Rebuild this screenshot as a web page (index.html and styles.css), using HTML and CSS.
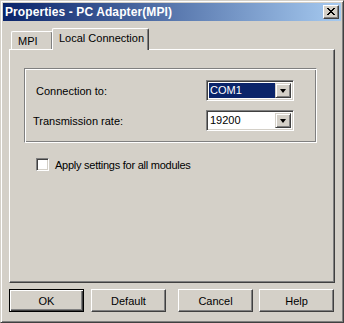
FILE: index.html
```html
<!DOCTYPE html>
<html lang="en">
<head>
  <meta charset="UTF-8" />
  <title>Properties - PC Adapter(MPI)</title>
  <link rel="stylesheet" href="styles.css">
</head>
<body>
  <div class="window">
    <div class="titlebar">
      <span class="title">Properties - PC Adapter(MPI)</span>
      <div class="close">
        <svg width="8" height="7" viewBox="0 0 8 7"><path d="M0 0h2v1h1v1h2v-1h1v-1h2v1h-1v1h-1v1h-1v1h1v1h1v1h1v1h-2v-1h-1v-1h-2v1h-1v1h-2v-1h1v-1h1v-1h1v-1h-1v-1h-1v-1h-1z" fill="#000"/></svg>
      </div>
    </div>

    <div class="content">
      <div class="tabs">
        <div class="tab">MPI</div>
        <div class="tab active">Local Connection</div>
      </div>

      <div class="panel">
        <div class="group">
          <div class="row">
            <span class="label first">Connection to:</span>
            <div class="combo">
              <span class="value selected">COM1</span>
              <span class="drop"><span class="arrow"></span></span>
            </div>
          </div>
          <div class="row">
            <span class="label">Transmission rate:</span>
            <div class="combo">
              <span class="value">19200</span>
              <span class="drop"><span class="arrow"></span></span>
            </div>
          </div>
        </div>

        <div class="check">
          <span class="box"></span>
          <span class="check-text">Apply settings for all modules</span>
        </div>
      </div>

      <div class="buttons">
        <div class="btn default-btn"><span>OK</span></div>
        <div class="btn">Default</div>
        <div class="btn cancel">Cancel</div>
        <div class="btn help">Help</div>
      </div>
    </div>
  </div>
</body>
</html>
```

FILE: styles.css
```css
body {
  margin: 0;
  font-family: 'Liberation Sans', Arial, sans-serif;
  font-size: 11px;
  color: #000;
  background: #d4d0c8;
}

.window {
  width: 344px;
  height: 323px;
  box-sizing: border-box;
  background: #d4d0c8;
  border: 1px solid;
  border-color: #d4d0c8 #404040 #404040 #d4d0c8;
  box-shadow: inset 1px 1px #fff, inset -1px -1px #808080;
  padding: 2px;
  display: flex;
  flex-direction: column;
}

.titlebar {
  height: 18px;
  display: flex;
  align-items: center;
  justify-content: space-between;
  padding: 0 2px 0 2px;
  background: linear-gradient(to right, #0a246a, #a6caf0);
}

.title {
  color: #fff;
  font-weight: bold;
  font-size: 12px;
  letter-spacing: 0.1px;
}

.close {
  width: 16px;
  height: 14px;
  box-sizing: border-box;
  background: #d4d0c8;
  border: 1px solid;
  border-color: #fff #404040 #404040 #fff;
  box-shadow: inset -1px -1px #808080;
  display: flex;
  align-items: center;
  justify-content: center;
  padding: 0 1px 1px 0;
}

.content {
  flex: 1;
  display: flex;
  flex-direction: column;
  padding: 7px 6px 0 6px;
}

.tabs {
  display: flex;
  align-items: flex-end;
  height: 21px;
  padding-left: 2px;
}

.tab {
  height: 18px;
  box-sizing: border-box;
  width: 42px;
  border: 1px solid;
  border-color: #fff #404040 transparent #fff;
  border-bottom: none;
  border-radius: 2px 2px 0 0;
  box-shadow: inset -1px 0 #808080;
  padding: 3px 0 0 6px;
}

.tab.active {
  position: relative;
  z-index: 1;
  height: 22px;
  width: 97px;
  margin-left: -1px;
  margin-bottom: -1px;
  background: #d4d0c8;
  padding: 3px 0 0 6px;
}

.panel {
  flex: 1;
  border: 1px solid;
  border-color: #fff #404040 #404040 #fff;
  box-shadow: inset -1px -1px #808080;
  padding: 18px 17px 0 14px;
}

.group {
  border: 1px solid;
  border-color: #808080 #fff #fff #808080;
  box-shadow: inset 1px 1px #fff, inset -1px -1px #808080;
  padding: 11px 22px 10px 8px;
  display: flex;
  flex-direction: column;
  gap: 9px;
  height: 52px;
}

.row {
  display: flex;
  align-items: center;
  justify-content: space-between;
}

.label.first {
  padding-left: 3px;
}

.combo {
  width: 88px;
  height: 21px;
  box-sizing: border-box;
  background: #fff;
  border: 1px solid;
  border-color: #808080 #fff #fff #808080;
  box-shadow: inset 1px 1px #404040, inset -1px -1px #d4d0c8;
  padding: 2px;
  display: flex;
}

.value {
  flex: 1;
  padding-left: 1px;
  line-height: 15px;
}

.value.selected {
  background: #0a246a;
  color: #fff;
}

.drop {
  width: 16px;
  height: 15px;
  box-sizing: border-box;
  background: #d4d0c8;
  border: 1px solid;
  border-color: #d4d0c8 #404040 #404040 #d4d0c8;
  box-shadow: inset 1px 1px #fff, inset -1px -1px #808080;
  display: flex;
  align-items: center;
  justify-content: center;
}

.arrow {
  width: 0;
  height: 0;
  border-left: 3.5px solid transparent;
  border-right: 3.5px solid transparent;
  border-top: 4px solid #000;
}

.check {
  display: flex;
  align-items: center;
  gap: 6px;
  margin-top: 15px;
  padding-left: 12px;
}

.check-text {
  letter-spacing: -0.25px;
}

.box {
  width: 13px;
  height: 13px;
  box-sizing: border-box;
  background: #fff;
  border: 1px solid;
  border-color: #808080 #fff #fff #808080;
  box-shadow: inset 1px 1px #404040, inset -1px -1px #d4d0c8;
}

.buttons {
  display: flex;
  height: 23px;
  margin: 6px 0 8px 0;
}

.btn {
  width: 75px;
  height: 23px;
  box-sizing: border-box;
  border: 1px solid;
  border-color: #fff #404040 #404040 #fff;
  box-shadow: inset -1px -1px #808080;
  display: flex;
  align-items: center;
  justify-content: center;
  margin-right: 7px;
}

.btn.default-btn {
  border: 1px solid #000;
  box-shadow: inset 1px 1px #fff, inset -1px -1px #404040, inset -2px -2px #808080;
}

.btn.cancel {
  margin-left: 5px;
  margin-right: 6px;
}

.btn.help {
  margin-right: 0;
}
```
